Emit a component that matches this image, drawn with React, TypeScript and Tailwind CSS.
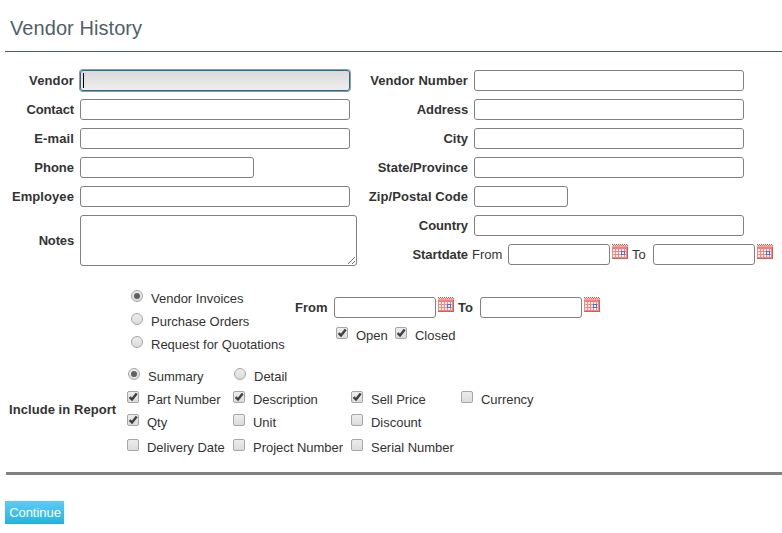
import React from 'react';

const fieldBase = 'box-border block h-[21px] shrink-0 rounded-[3px] border border-[#808080] bg-white outline-none';

function Field({ label, width = 'w-[270px]', labelWidth, tracking = '' }: { label: string; width?: string; labelWidth: string; tracking?: string }) {
  return (
    <div className="flex h-[29px] items-center gap-[6px]">
      <label className={`${labelWidth} ${tracking} shrink-0 text-right font-bold whitespace-nowrap`}>{label}</label>
      <div className={`${fieldBase} ${width}`} />
    </div>
  );
}

function Calendar() {
  return (
    <svg className="mb-[5px] ml-[2px] h-4 w-4 shrink-0" viewBox="0 0 16 16" shapeRendering="crispEdges">
      <rect x="0" y="1" width="16" height="14" fill="#f28a84" />
      <path d="M0 .5h16" stroke="#a85c58" strokeDasharray="1 1" />
      <path d="M0 1.5h16" stroke="#fbd0cd" />
      <path d="M1 1.5h15" stroke="#d0706b" strokeDasharray="1 1" />
      <rect x="0" y="2" width="16" height="1" fill="#f8a39e" />
      <rect x="0" y="3" width="16" height="2" fill="#f47f79" />
      <g fill="#fff0ef">
        {[5, 8, 11].map((y) =>
          [1, 4, 7, 10].map((x) => <rect key={`${x}-${y}`} x={x} y={y} width="2" height="2" />),
        )}
        <path d="M13 5h1v2h-1zM13 8h1v2h-1zM13 11h1v2h-1z" />
      </g>
      <rect x="15" y="3" width="1" height="12" fill="#c9605a" />
      <rect x="0" y="14" width="16" height="1" fill="#c9605a" />
      <rect x="9" y="7" width="4" height="4" fill="#3f76e6" />
      <rect x="10" y="8" width="2" height="2" fill="#e8f1ff" />
    </svg>
  );
}

function Check({ label, checked = false, width = '' }: { label: string; checked?: boolean; width?: string }) {
  return (
    <div className={`flex h-[23px] shrink-0 items-center ${width}`}>
      <span className="mr-2 mb-[5px] h-3 w-3 shrink-0 rounded-[2px] border border-[#a6a6a6] bg-linear-to-b from-[#ededed] to-[#dcdcdc]">
        {checked && (
          <svg className="block h-[10px] w-[10px] overflow-visible" viewBox="0 0 10 10">
            <path d="M1.6 5.2 4 7.4 8.7 1.4" fill="none" stroke="#404040" strokeWidth="2.4" />
          </svg>
        )}
      </span>
      <span className="tracking-[-0.02px] whitespace-nowrap">{label}</span>
    </div>
  );
}

function Radio({ label, checked = false, width = '' }: { label: string; checked?: boolean; width?: string }) {
  return (
    <div className={`flex h-[23px] shrink-0 items-center ${width}`}>
      <span className="mr-2 mb-[5px] flex h-3 w-3 shrink-0 items-center justify-center rounded-full border border-[#a6a6a6] bg-linear-to-b from-[#ededed] to-[#dcdcdc]">
        {checked && <span className="h-[6px] w-[6px] rounded-full bg-[#606060]" />}
      </span>
      <span className="whitespace-nowrap">{label}</span>
    </div>
  );
}

export default function App() {
  return (
    <div className="h-[533px] w-full overflow-hidden bg-white pl-[5px] font-['Liberation_Sans',Arial,sans-serif] text-[13px] leading-[15px] text-[#333]">
      <h1 className="flex h-[52px] items-center border-b border-[#4f5f6a] pt-[5px] pl-[5px] text-[20px] leading-6 tracking-[0.07px] text-[#4f5f6a]">
        Vendor History
      </h1>

      <div className="flex h-[217px] pt-[14px]">
        <div className="w-[363px] shrink-0">
          <div className="flex h-[29px] items-center gap-[6px]">
            <label className="w-[69px] shrink-0 text-right font-bold tracking-[0.15px]">Vendor</label>
            <div className="flex h-[21px] w-[270px] items-center rounded-[3px] border border-[#1d6f93] bg-linear-to-b from-[#dadada] to-[#eee] pl-[2px] ring-1 ring-[#808080]/80">
              <span className="h-[15px] w-px bg-black" />
            </div>
          </div>
          <Field label="Contact" labelWidth="w-[69px]" tracking="tracking-[-0.12px]" />
          <Field label="E-mail" labelWidth="w-[69px]" tracking="tracking-[0.12px]" />
          <Field label="Phone" labelWidth="w-[69px]" width="w-[174px]" />
          <Field label="Employee" labelWidth="w-[69px]" tracking="tracking-[0.08px]" />
          <div className="flex h-[58px] items-center gap-[6px]">
            <label className="w-[69px] shrink-0 text-right font-bold tracking-[-0.15px]">Notes</label>
            <div className="flex h-[51px] w-[277px] shrink-0 items-end justify-end rounded-[3px] border border-[#808080]">
              <svg className="h-[9px] w-[9px]" viewBox="0 0 9 9">
                <path d="M1 8 8 1M5 8l3-3" stroke="#666" strokeWidth=".9" />
              </svg>
            </div>
          </div>
        </div>

        <div className="shrink-0">
          <Field label="Vendor Number" labelWidth="w-[100px]" tracking="tracking-[0.08px]" />
          <Field label="Address" labelWidth="w-[100px]" tracking="tracking-[-0.12px]" />
          <Field label="City" labelWidth="w-[100px]" />
          <Field label="State/Province" labelWidth="w-[100px]" />
          <Field label="Zip/Postal Code" labelWidth="w-[100px]" width="w-[94px]" tracking="tracking-[0.06px]" />
          <Field label="Country" labelWidth="w-[100px]" tracking="tracking-[-0.1px]" />
          <div className="flex h-[29px] items-center">
            <span className="w-[100px] shrink-0 text-right font-bold tracking-[-0.1px]">Startdate</span>
            <span className="ml-1 w-[36px] shrink-0">From</span>
            <div className={`${fieldBase} w-[102px]`} />
            <Calendar />
            <span className="ml-1 w-[21px] shrink-0">To</span>
            <div className={`${fieldBase} w-[102px]`} />
            <Calendar />
          </div>
        </div>
      </div>

      <div className="flex h-[96px] pt-[18px] pl-[126px]">
        <div className="w-[164px] shrink-0">
          <Radio label="Vendor Invoices" checked />
          <Radio label="Purchase Orders" />
          <Radio label="Request for Quotations" />
        </div>
        <div className="pt-[6px]">
          <div className="flex h-[29px] items-center">
            <span className="w-[39px] shrink-0 font-bold">From</span>
            <div className={`${fieldBase} w-[102px]`} />
            <Calendar />
            <span className="ml-1 w-[22px] shrink-0 font-bold">To</span>
            <div className={`${fieldBase} w-[102px]`} />
            <Calendar />
          </div>
          <div className="flex pt-[2px] pl-[41px]">
            <Check label="Open" checked width="w-[59px]" />
            <Check label="Closed" checked />
          </div>
        </div>
      </div>

      <div className="flex h-[107px] items-start pl-1">
        <div className="flex h-[89px] w-[118px] shrink-0 items-center font-bold tracking-[0.06px]">Include in Report</div>
        <div>
          <div className="flex pl-px">
            <Radio label="Summary" checked width="w-[106px]" />
            <Radio label="Detail" />
          </div>
          <div className="flex">
            <Check label="Part Number" checked width="w-[106px]" />
            <Check label="Description" checked width="w-[118px]" />
            <Check label="Sell Price" checked width="w-[110px]" />
            <Check label="Currency" />
          </div>
          <div className="flex">
            <Check label="Qty" checked width="w-[106px]" />
            <Check label="Unit" width="w-[118px]" />
            <Check label="Discount" />
          </div>
          <div className="flex pt-[2px]">
            <Check label="Delivery Date" width="w-[106px]" />
            <Check label="Project Number" width="w-[118px]" />
            <Check label="Serial Number" />
          </div>
        </div>
      </div>

      <div className="ml-px h-[3px] bg-[#808080]" />
      <button className="mt-[26px] flex h-[23px] w-[59px] items-center justify-center bg-linear-to-b from-[#5bcbf7] to-[#1fb3dc] pl-px text-[13px] tracking-[-0.05px] text-white">
        Continue
      </button>
    </div>
  );
}
